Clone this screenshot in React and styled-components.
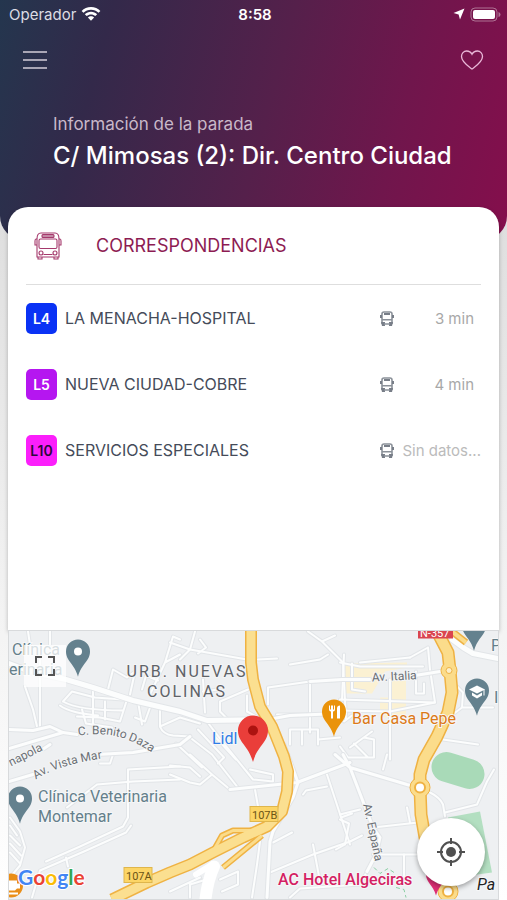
import styled, { createGlobalStyle } from 'styled-components';

const stopLines = [
    { id: 'L4', name: 'LA MENACHA-HOSPITAL', time: '3 min', background: '#0a32f5', color: '#ffffff' },
    { id: 'L5', name: 'NUEVA CIUDAD-COBRE', time: '4 min', background: '#b516f0', color: '#ffffff' },
    { id: 'L10', name: 'SERVICIOS ESPECIALES', time: null, background: '#fb1ffb', color: '#2a0a3c' },
];

// Streets are grouped by width, every group gets a grey casing under the white line
const thinStreets = [
    'M25 687L33 710L37 727',
    'M40 660V727',
    'M28 632L30 645M50 632V645',
    'M63 702C70 706 85 711 123 711M72 692L95 698L123 700M63 702L72 692',
    'M60 706C68 712 80 714 98 716M77 717L100 718L120 722L127 700M93 692V727M105 702V720',
    'M82 710L86 724L112 728',
    'M108 690L113 670L127 678L135 672L130 695M180 640L173 637L165 663L150 695M165 663L180 655M142 690L146 676L158 681',
    'M138 702L142 725M150 708L145 722L135 718',
    'M160 707V727Q163 735 173 736L190 737',
    'M160 727L180 718L200 724',
    'M170 643L190 650L247 660M190 650L195 632M190 650L180 660M200 640L206 648L198 654',
    'M258 660L277 659M290 665L320 660L328 655',
    'M308 632L322 642L343 663L346 720M322 642L335 636',
    'M268 705V688L310 682L350 680M310 682V733M277 715L323 715M290 745V730H318V745M302 730V745',
    'M203 680L205 713M220 702L248 690M220 702V712L226 718M203 692L218 690',
    'M247 696V712L258 718',
    'M323 715L346 714M318 740L340 738',
    'M207 722L213 730L223 743L253 780L273 782V775L250 770',
    'M190 738L212 755L237 787M176 744L202 768',
    'M214 736L236 760M198 730L224 758L218 764',
    'M190 755L212 775L230 790M170 775L190 783L200 785L212 775M170 766L190 768L200 777',
    'M303 795L306 791L327 787M327 775L350 845M270 873L313 855L350 842L362 836',
    'M313 845L320 882M255 790L258 807M341 818L352 814',
    'M273 843L292 833M260 842L257 865L252 898',
    'M190 898V885L213 878M220 880L238 872V885L222 892M170 892L200 878',
    'M97 785L67 808M97 785L133 782L180 780M100 764H110L113 755',
    'M128 770L180 767M128 770V818L123 827L80 847L46 862M66 858L68 867',
    'M131 826L126 833L84 852L40 871L32 898',
    'M10 818L20 832L25 848L20 866L10 878M10 836L20 846M10 844L21 856M10 853L20 864M10 826L17 836',
    'M340 663L360 667L423 667M410 658L428 648M428 648L430 670L435 703L340 700',
    'M344 655L342 700M352 664V690L365 692M410 658L360 663M390 680V760M416 672V694L424 694V684',
    'M340 711L390 712L435 703M340 747L348 758H374V740L364 738M350 748L372 732M354 744L368 758M344 722L352 716',
    'M457 687L463 693L462 708L493 708M450 717L462 708M443 740L478 745',
    'M373 828L418 823M407 808L410 823M373 855L417 855M383 770L387 755M340 815L360 810M340 820L349 824L345 845L336 850',
    'M430 793Q440 798 443 805L445 817M445 813L477 805L487 782L494 770',
    'M404 855V880M290 898L300 889L360 885L367 872',
];

const mainStreets = [
    'M9 730L33 731L50 727L63 733L77 735',
    'M9 749L63 733M9 782L33 775M44 749L50 745',
    'M97 755L133 753L180 745L190 737',
    'M230 790L297 783L350 763',
    'M268 720L290 716L340 714',
    'M284 745L298 783L293 798L273 832L270 842L267 898',
    'M370 680H342L310 682M415 676L440 672',
    'M343 755L350 768L407 785L418 788M335 755L350 768L363 802L373 828L380 838L376 855L367 872',
];

const bigStreets = [
    'M9 664L30 672L66 680L93 688L133 701L180 712L207 721L268 720',
    'M452 640L463 648L473 654L498 659',
];

const motorway = 'M251 628V663L253 680L260 707L272 727L284 757L288 772L287 792L282 812L267 827L243 838L213 853L190 865L170 873L147 883L112 900';
const avenue = 'M435 628L448 653L450 671L452 693L448 713L437 737L424 760L420 775L420 788L421 815L425 838L434 870L448 892';

function Streets({ paths, width }) {
    return (
        <g fill="none" strokeLinejoin="round" strokeLinecap="round">
            {paths.map((d) => <path key={`casing ${d}`} d={d} stroke="#e2e5e8" strokeWidth={width + 2} />)}
            {paths.map((d) => <path key={d} d={d} stroke="#fcfdfd" strokeWidth={width} />)}
        </g>
    );
}

function Pin({ x, y, r = 12, fill = '#64818e', children }) {
    return (
        <g transform={`translate(${x} ${y})`}>
            <path
                d={`M${-r} 0A${r} ${r} 0 1 1 ${r} 0C${r} ${r * 0.8} ${r * 0.3} ${r} 0 ${r * 2.1}C${-r * 0.3} ${r} ${-r} ${r * 0.8} ${-r} 0Z`}
                fill={fill}
            />
            {children}
        </g>
    );
}

function StopMap() {
    return (
        <MapDrawing viewBox="9 631 489 269" preserveAspectRatio="xMidYMid slice" role="img" aria-label="Mapa de la parada">
            <rect x="9" y="631" width="489" height="269" fill="#eef0f2" />
            <path d="M345 664L407 663V668L385 672L372 694H345ZM390 676H406V718H380V698H390Z" fill="#fbf1d3" />
            <rect x="431" y="756" width="54" height="30" rx="15" fill="#a9dab8" transform="rotate(17 458 771)" />
            <path d="M448 818L480 812L492 873L470 876Z" fill="#b3dfc1" />

            <Streets paths={thinStreets} width={2} />
            <Streets paths={mainStreets} width={3} />
            <Streets paths={bigStreets} width={5} />
            <path d="M374 868L380 874L388 869L394 873M396 888L404 890L406 898" fill="none" stroke="#8ccfa5" strokeDasharray="4 3" />

            <g fill="none" strokeLinejoin="round">
                <path d="M213 852L222 836L233 831L262 831M223 868L262 836" stroke="#efb243" strokeWidth="6" />
                <path d={motorway} stroke="#efb243" strokeWidth="12" />
                <path d={avenue} stroke="#efb243" strokeWidth="13" />
                <path d="M447 628L466 643" stroke="#efb243" strokeWidth="7" />
                <circle cx="449" cy="671" r="8" fill="#fbdc8b" stroke="#efb243" />
                <circle cx="420" cy="788" r="10" fill="#fbdc8b" stroke="#efb243" />
                <circle cx="448" cy="892" r="10" fill="#fbdc8b" stroke="#efb243" />
                <path d="M213 852L222 836L233 831L262 831M223 868L262 836" stroke="#fbdc8b" strokeWidth="3" />
                <path d={motorway} stroke="#fbdf90" strokeWidth="9" />
                <path d={avenue} stroke="#fbdc8b" strokeWidth="10" />
                <path d="M447 628L466 643" stroke="#fbdc8b" strokeWidth="4" />
                <circle cx="449" cy="671" r="3" fill="#fbeec8" stroke="#efb243" />
                <circle cx="420" cy="788" r="5" fill="#ffffff" stroke="#efb243" strokeWidth="2" />
                <circle cx="448" cy="892" r="5" fill="#ffffff" stroke="#efb243" strokeWidth="2" />
                <path d="M205 904Q207 882 214 867" stroke="#ffffff" strokeWidth="12" strokeLinecap="round" />
                <path d="M196 875L212 865" stroke="#ffffff" strokeWidth="6" strokeLinecap="round" />
            </g>

            <Pin x={78} y={652}><circle r="4" fill="#ffffff" /></Pin>
            <Pin x={20} y={799}><circle r="4" fill="#ffffff" /></Pin>
            <Pin x={474} y={626} />
            <Pin x={477} y={691}>
                <path d="M-8 -1L0 -5L8 -1L0 3ZM-5 2L0 5L5 2V5L0 8L-5 5Z" fill="#ffffff" />
                <path d="M7 -1V5" stroke="#ffffff" />
            </Pin>
            <Pin x={334} y={712} fill="#ea930a">
                <path d="M-5 -6V-2Q-5 0 -3 0V7H-1V0Q1 0 1 -2V-6H0V-2H-1V-6H-3V-2H-4V-6ZM3 7V-3Q3 -6 6 -6V7Z" fill="#ffffff" />
            </Pin>
            <Pin x={436} y={875} r={10} fill="#dd2f75" />
            <g>
                <circle cx="11" cy="886" r="12" fill="#ea8e17" />
                <path d="M8 881H17V884H20V889H17L15 891H9L8 889ZM7 893H18V895H7Z" fill="#ffffff" />
            </g>

            <rect x="418" y="628" width="35" height="11" fill="#da4550" />
            <ShieldText x="420" y="637" $light>N-357</ShieldText>
            <rect x="124" y="868" width="28" height="15" fill="#fcd566" stroke="#dfb64c" />
            <ShieldText x="126" y="880">107A</ShieldText>
            <rect x="250" y="807" width="28" height="15" fill="#fcd566" stroke="#dfb64c" />
            <ShieldText x="252" y="819">107B</ShieldText>

            <DistrictText x="187" y="677">URB. NUEVAS</DistrictText>
            <DistrictText x="187" y="697">COLINAS</DistrictText>

            <path id="benito-daza" d="M78 736Q110 732 129 741Q143 746 165 762" fill="none" />
            <StreetText><textPath href="#benito-daza">C. Benito Daza</textPath></StreetText>
            <path id="vista-mar" d="M36 780Q56 766 102 759" fill="none" />
            <StreetText><textPath href="#vista-mar">Av. Vista Mar</textPath></StreetText>
            <StreetText transform="translate(11 767) rotate(-27)">napola</StreetText>
            <StreetText transform="translate(372 682) rotate(-3)">Av. Italia</StreetText>
            <StreetText transform="translate(363 805) rotate(78)">Av. España</StreetText>

            <PlaceText x="12" y="655">Clínica</PlaceText>
            <PlaceText x="9" y="675">erinaria</PlaceText>
            <PlaceText x="38" y="802">Clínica Veterinaria</PlaceText>
            <PlaceText x="38" y="822">Montemar</PlaceText>
            <PlaceText x="491" y="651">P</PlaceText>
            <PlaceText x="494" y="703">I</PlaceText>
            <PlaceText x="352" y="724" $color="#dc7a18">Bar Casa Pepe</PlaceText>
            <PlaceText x="212" y="744" $color="#2f7de6">Lidl</PlaceText>
            <PlaceText x="278" y="885" $color="#d41f63" fontWeight="500">AC Hotel Algeciras</PlaceText>
            <PlaceText x="477" y="890" $color="#222222" fontStyle="italic">Pa</PlaceText>

            <Pin x={253} y={731} r={15} fill="#ea3e3a"><circle r="5" fill="#ac1310" /></Pin>

            <GoogleText x="18" y="885">
                <tspan fill="#4285f4">G</tspan>
                <tspan fill="#ea4335">o</tspan>
                <tspan fill="#fbbc05">o</tspan>
                <tspan fill="#4285f4">g</tspan>
                <tspan fill="#34a853">l</tspan>
                <tspan fill="#ea4335">e</tspan>
            </GoogleText>
        </MapDrawing>
    );
}

function WifiIcon() {
    return (
        <svg width="20" height="15" viewBox="0 0 20 15" fill="#ffffff" aria-hidden="true">
            <path d="M10 0C6.300 0 3 1.400 .6 3.900L2.500 5.800C4.500 3.800 7.100 2.700 10 2.700S15.500 3.800 17.500 5.800L19.400 3.900C17 1.400 13.700 0 10 0Z" />
            <path d="M10 4.700C7.600 4.700 5.400 5.600 3.800 7.200L5.700 9.100C6.900 8 8.400 7.400 10 7.400S13.100 8 14.300 9.100L16.200 7.200C14.600 5.600 12.400 4.700 10 4.700Z" />
            <path d="M10 9.300C8.800 9.300 7.700 9.800 6.900 10.500L10 13.800L13.100 10.500C12.300 9.800 11.200 9.300 10 9.300Z" />
        </svg>
    );
}

function BatteryIcon() {
    return (
        <svg width="31" height="15" viewBox="0 0 31 15" aria-hidden="true">
            <rect x="1" y="1" width="26" height="13" rx="4" fill="none" stroke="#ffffff" strokeOpacity="0.4" />
            <rect x="3" y="3" width="22" height="9" rx="2" fill="#ffffff" />
            <path d="M28.500 5V10Q30.500 9.500 30.500 7.500T28.500 5Z" fill="#ffffff" fillOpacity="0.4" />
        </svg>
    );
}

function BusOutlineIcon() {
    return (
        <svg width="28" height="28" viewBox="0 0 28 28" fill="none" stroke="#a5396c" strokeWidth="1.100" aria-hidden="true">
            <path d="M3 25V7Q3 1 7 1H21Q25 1 25 7V25Z" />
            <path d="M3 7H2Q1 7 1 9V13H3M25 7H26Q27 7 27 9V13H25" />
            <rect x="8" y="2.500" width="12" height="3" rx="1" fill="#c48ba6" />
            <rect x="5" y="7" width="18" height="9.500" rx="1.500" />
            <circle cx="7" cy="21" r="2" />
            <circle cx="21" cy="21" r="2" />
            <path d="M9.500 22.500H18.500M4 25V27H8V25M20 25V27H24V25" />
        </svg>
    );
}

function BusIcon() {
    return (
        <svg width="14" height="15" viewBox="0 0 14 15" aria-hidden="true">
            <path d="M2 13V3Q2 1 4 1H10Q12 1 12 3V13" fill="none" stroke="#8b9199" strokeWidth="1.600" />
            <path d="M4 2H10V4H4ZM0 4H2V7H0ZM12 4H14V7H12ZM1 11H5V15H2ZM9 11H13L12 15H9Z" fill="#787e88" />
            <path d="M2 8.800H12M4 13H10" stroke="#8b9199" strokeWidth="1.400" />
        </svg>
    );
}

function LineRow({ line }) {
    return (
        <Row>
            <LineBadge $background={line.background} $color={line.color}>{line.id}</LineBadge>
            <LineName>{line.name}</LineName>
            <BusIcon />
            <ArrivalTime $empty={!line.time}>{line.time || 'Sin datos...'}</ArrivalTime>
        </Row>
    );
}

function App() {
    return (
        <>
            <GlobalStyle />
            <Page>
                <Header>
                    <StatusBar>
                        <StatusGroup>Operador <WifiIcon /></StatusGroup>
                        <Clock>8:58</Clock>
                        <StatusGroup $end>
                            <svg width="12" height="12" viewBox="0 0 12 12" fill="#ffffff" aria-hidden="true">
                                <path d="M11.500 .5L7 11.500L5.600 6.400L.5 5Z" />
                            </svg>
                            <BatteryIcon />
                        </StatusGroup>
                    </StatusBar>
                    <Toolbar>
                        <IconButton type="button" aria-label="Menú">
                            <svg width="24" height="20" viewBox="0 0 24 20" stroke="#d3cdd8" strokeWidth="1.300">
                                <path d="M0 2H24M0 10H24M0 18H24" />
                            </svg>
                        </IconButton>
                        <IconButton type="button" aria-label="Favorito">
                            <svg width="24" height="20" viewBox="0 0 24 20" fill="none" stroke="#eab8d8" strokeWidth="1.300">
                                <path d="M12 19C8 16 1.500 12 1.500 6.500C1.500 3.500 3.700 1 6.600 1C9 1 11 2.300 12 4.300C13 2.300 15 1 17.400 1C20.300 1 22.500 3.500 22.500 6.500C22.500 12 16 16 12 19Z" />
                            </svg>
                        </IconButton>
                    </Toolbar>
                    <StopInfo>
                        <StopLabel>Información de la parada</StopLabel>
                        <StopName>C/ Mimosas (2): Dir. Centro Ciudad</StopName>
                    </StopInfo>
                </Header>
                <Card>
                    <CardHeader>
                        <BusOutlineIcon />
                        <CardTitle>CORRESPONDENCIAS</CardTitle>
                    </CardHeader>
                    <Rows>
                        {stopLines.map((line) => <LineRow key={line.id} line={line} />)}
                    </Rows>
                </Card>
                <MapContainer>
                    <StopMap />
                    <FullscreenButton type="button" aria-label="Pantalla completa">
                        <svg width="20" height="20" viewBox="0 0 20 20" fill="none" stroke="#555555" strokeWidth="2">
                            <path d="M1 7V1H7M13 1H19V7M19 13V19H13M7 19H1V13" />
                        </svg>
                    </FullscreenButton>
                    <LocateButton type="button" aria-label="Mi ubicación">
                        <svg width="28" height="28" viewBox="0 0 28 28" fill="none" stroke="#505050" strokeWidth="2">
                            <circle cx="14" cy="14" r="10" />
                            <circle cx="14" cy="14" r="5" fill="#505050" stroke="none" />
                            <path d="M14 0V6M14 22V28M0 14H6M22 14H28" />
                        </svg>
                    </LocateButton>
                </MapContainer>
            </Page>
        </>
    );
}

export default App;

const GlobalStyle = createGlobalStyle`
    * {
        box-sizing: border-box;
    }

    body {
        margin: 0;
        font-family: Inter, "Liberation Sans", sans-serif;
    }

    button {
        padding: 0;
        border: 0;
        cursor: pointer;
    }
`;

const Page = styled.div`
    display: flex;
    flex-direction: column;
    min-height: 100vh;
    background: linear-gradient(#dfdfdf 25%, #f3f3f3 68%, #ffffff);
`;

const Header = styled.header`
    padding-bottom: 68px;
    border-radius: 0 0 24px 24px;
    background: linear-gradient(105deg, #24364e 0%, #33294a 20%, #55204b 52%, #70164c 76%, #850e4c 100%);
    color: #ffffff;
`;

const StatusBar = styled.div`
    display: grid;
    grid-template-columns: 1fr auto 1fr;
    align-items: center;
    height: 28px;
    padding: 0 6px 0 9px;
    font-size: 15px;
`;

const StatusGroup = styled.div`
    display: flex;
    align-items: center;
    justify-content: ${({ $end }) => ($end ? 'flex-end' : 'flex-start')};
    gap: 5px;
    color: #dcdde4;
`;

const Clock = styled.time`
    font-weight: 600;
`;

const Toolbar = styled.nav`
    display: flex;
    justify-content: space-between;
    padding: 16px 19px 0;
`;

const IconButton = styled.button`
    display: grid;
    place-items: center;
    width: 32px;
    height: 32px;
    background: none;
`;

const StopInfo = styled.div`
    padding: 36px 16px 0 53px;
`;

const StopLabel = styled.p`
    margin: 0;
    font-size: 17px;
    line-height: 24px;
    color: #c9b8c9;
`;

const StopName = styled.h1`
    margin: 4px 0 0;
    font-size: 24px;
    font-weight: 500;
    line-height: 32px;
`;

const Card = styled.section`
    flex: 1;
    margin: -33px 8px 0;
    padding: 0 18px;
    border-radius: 20px 20px 0 0;
    background: #ffffff;
    box-shadow: 0 2px 4px rgba(0, 0, 0, 0.25);
`;

const CardHeader = styled.div`
    display: flex;
    align-items: center;
    gap: 34px;
    height: 78px;
    padding-left: 8px;
    border-bottom: 1px solid #dedede;
`;

const CardTitle = styled.h2`
    margin: 0;
    font-size: 18px;
    font-weight: 400;
    color: #8d1c53;
`;

const Rows = styled.ul`
    margin: 0;
    padding: 0;
    list-style: none;
`;

const Row = styled.li`
    display: grid;
    grid-template-columns: 31px 1fr 14px 87px;
    align-items: center;
    height: 66px;
`;

const LineBadge = styled.span`
    display: grid;
    place-items: center;
    height: 31px;
    border-radius: 5px;
    background: ${({ $background }) => $background};
    color: ${({ $color }) => $color};
    font-size: 14px;
    font-weight: 600;
`;

const LineName = styled.span`
    padding-left: 8px;
    font-size: 16px;
    color: #454b59;
`;

const ArrivalTime = styled.span`
    padding-right: ${({ $empty }) => ($empty ? '0' : '7px')};
    font-size: 15px;
    color: ${({ $empty }) => ($empty ? '#bbbbbb' : '#a8a8a8')};
    text-align: right;
    white-space: nowrap;
`;

const MapContainer = styled.section`
    position: relative;
    height: 270px;
    margin: 0 8px;
    border: 1px solid #d8dadc;
    overflow: hidden;
`;

const MapDrawing = styled.svg`
    display: block;
    width: 100%;
    height: 100%;
    font-family: Roboto, "Liberation Sans", sans-serif;
`;

const ShieldText = styled.text`
    font-size: 11px;
    fill: ${({ $light }) => ($light ? '#ffffff' : '#6b5416')};
`;

const DistrictText = styled.text`
    font-size: 16px;
    letter-spacing: 2px;
    text-anchor: middle;
    fill: #5f6368;
    stroke: #f4f5f6;
    stroke-width: 2px;
    paint-order: stroke;
`;

const StreetText = styled.text`
    font-size: 12px;
    fill: #6b7075;
    stroke: #f4f5f6;
    stroke-width: 2px;
    paint-order: stroke;
`;

const PlaceText = styled.text`
    font-size: 16px;
    fill: ${({ $color }) => $color || '#647f8b'};
    stroke: #f6f7f8;
    stroke-width: 2px;
    paint-order: stroke;
`;

const GoogleText = styled.text`
    font-family: Lato, "Liberation Sans", sans-serif;
    font-size: 21px;
    font-weight: 700;
    stroke: #ffffff;
    stroke-width: 2px;
    paint-order: stroke;
`;

const FullscreenButton = styled.button`
    position: absolute;
    top: 14px;
    left: 15px;
    display: grid;
    place-items: center;
    width: 42px;
    height: 42px;
    background: rgba(255, 255, 255, 0.75);
`;

const LocateButton = styled.button`
    position: absolute;
    right: 13px;
    bottom: 13px;
    display: grid;
    place-items: center;
    width: 68px;
    height: 68px;
    border-radius: 50%;
    background: #ffffff;
    box-shadow: 0 2px 5px rgba(0, 0, 0, 0.35);
`;
